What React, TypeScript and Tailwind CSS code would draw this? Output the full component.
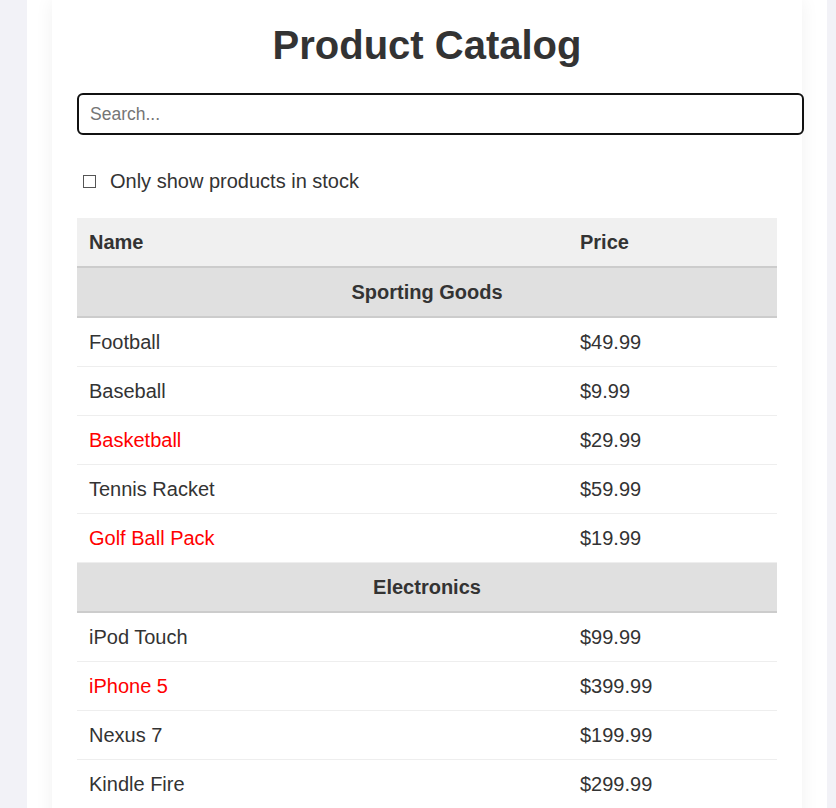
import React from "react";

type Product = { category: string; name: string; price: string; stocked: boolean };

const products: Product[] = [
  { category: "Sporting Goods", name: "Football", price: "$49.99", stocked: true },
  { category: "Sporting Goods", name: "Baseball", price: "$9.99", stocked: true },
  { category: "Sporting Goods", name: "Basketball", price: "$29.99", stocked: false },
  { category: "Sporting Goods", name: "Tennis Racket", price: "$59.99", stocked: true },
  { category: "Sporting Goods", name: "Golf Ball Pack", price: "$19.99", stocked: false },
  { category: "Electronics", name: "iPod Touch", price: "$99.99", stocked: true },
  { category: "Electronics", name: "iPhone 5", price: "$399.99", stocked: false },
  { category: "Electronics", name: "Nexus 7", price: "$199.99", stocked: true },
  { category: "Electronics", name: "Kindle Fire", price: "$299.99", stocked: true },
];

export default function App() {
  const rows: React.ReactNode[] = [];
  let last = "";
  products.forEach((p) => {
    if (p.category !== last) {
      rows.push(
        <tr key={"c-" + p.category} className="bg-[#e0e0e0] border-b-2 border-[#cccccc]">
          <th colSpan={2} className="px-[12px] py-[12px] text-center font-bold leading-[24px]">
            {p.category}
          </th>
        </tr>
      );
      last = p.category;
    }
    rows.push(
      <tr key={p.name} className="border-b border-[#eeeeee]">
        <td className={"px-[12px] py-[12px] leading-[24px] " + (p.stocked ? "" : "text-[#ff0000]")}>{p.name}</td>
        <td className="px-[12px] py-[12px] leading-[24px]">{p.price}</td>
      </tr>
    );
  });

  return (
    <div
      className="min-h-screen bg-[#f2f2f7] text-[#333333]"
      style={{ fontFamily: '"Liberation Sans", Arial, sans-serif' }}
    >
      <div className="ml-[27px] w-[800px] bg-white px-[25px] min-h-screen">
        <div className="bg-white shadow-[0_0_18px_rgba(0,0,0,0.06)] px-[25px] pt-[22px] pb-[25px] min-h-screen">
          <h1 className="text-center text-[40px] leading-[46px] font-bold text-[#333333]">Product Catalog</h1>
          <input
            autoFocus
            type="text"
            placeholder="Search..."
            className="mt-[25px] block box-content w-[700px] h-[22px] py-[8px] pl-[11px] pr-[12px] border-2 border-[#111111] rounded-[6px] text-[17.5px] text-[#333333] placeholder:text-[#757575] outline-none bg-white caret-black"
            style={{ fontFamily: '"Liberation Sans", Arial, sans-serif' }}
          />
          <label className="mt-[35px] mb-[25px] flex items-center h-[23px] text-[20px] leading-[23px]">
            <span className="ml-[6px] w-[13px] h-[13px] border border-[#555555] bg-white"></span>
            <span className="ml-[14px]">Only show products in stock</span>
          </label>
          <table className="w-[700px] border-collapse text-[20px] table-fixed">
            <thead>
              <tr className="bg-[#f0f0f0] border-b-2 border-[#cccccc]">
                <th className="w-[491px] px-[12px] py-[12px] text-left font-bold leading-[24px]">Name</th>
                <th className="w-[209px] px-[12px] py-[12px] text-left font-bold leading-[24px]">Price</th>
              </tr>
            </thead>
            <tbody>{rows}</tbody>
          </table>
        </div>
      </div>
    </div>
  );
}
